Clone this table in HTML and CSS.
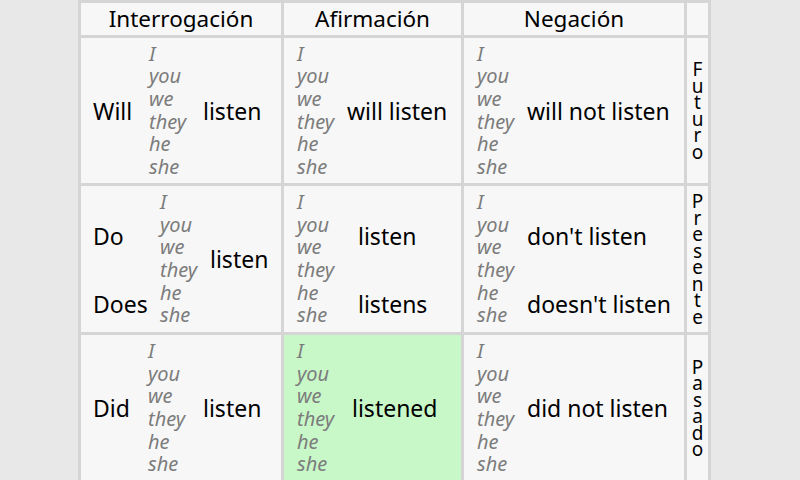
FILE: index.html
```html
<!DOCTYPE html>
<html lang="es">
<head>
<meta charset="utf-8">
<title>listen</title>
<link rel="stylesheet" href="styles.css">
</head>
<body>
<div class="table">
  <div class="cell head">Interrogación</div>
  <div class="cell head">Afirmación</div>
  <div class="cell head">Negación</div>
  <div class="cell head"></div>

  <div class="cell c1">
    <div class="lbl lbl-will">Will</div>
    <div class="pr">I<br>you<br>we<br>they<br>he<br>she</div>
    <div class="verb m14">listen</div>
  </div>
  <div class="cell c2">
    <div class="pr">I<br>you<br>we<br>they<br>he<br>she</div>
    <div class="verb m10">will listen</div>
  </div>
  <div class="cell c3">
    <div class="pr">I<br>you<br>we<br>they<br>he<br>she</div>
    <div class="verb m10">will not listen</div>
  </div>
  <div class="cell side"><div class="word">Futuro</div></div>

  <div class="cell c1">
    <div class="lbl lbl-do">
      <div class="b4">Do</div>
      <div class="b2">Does</div>
    </div>
    <div class="pr">I<br>you<br>we<br>they<br>he<br>she</div>
    <div class="verb m10">listen</div>
  </div>
  <div class="cell c2">
    <div class="pr">I<br>you<br>we<br>they<br>he<br>she</div>
    <div class="verbs m21">
      <div class="b4">listen</div>
      <div class="b2">listens</div>
    </div>
  </div>
  <div class="cell c3">
    <div class="pr">I<br>you<br>we<br>they<br>he<br>she</div>
    <div class="verbs m10">
      <div class="b4">don't listen</div>
      <div class="b2">doesn't listen</div>
    </div>
  </div>
  <div class="cell side"><div class="word">Presente</div></div>

  <div class="cell c1">
    <div class="lbl lbl-did">Did</div>
    <div class="pr">I<br>you<br>we<br>they<br>he<br>she</div>
    <div class="verb m15">listen</div>
  </div>
  <div class="cell c2 green">
    <div class="pr">I<br>you<br>we<br>they<br>he<br>she</div>
    <div class="verb m15">listened</div>
  </div>
  <div class="cell c3">
    <div class="pr">I<br>you<br>we<br>they<br>he<br>she</div>
    <div class="verb m10">did not listen</div>
  </div>
  <div class="cell side"><div class="word">Pasado</div></div>
</div>
</body>
</html>
```

FILE: styles.css
```css
html, body {
  margin: 0;
  padding: 0;
  background: #e8e8e8;
  overflow: hidden;
  width: 800px;
  height: 480px;
}

body {
  font-family: "Noto Sans", "Open Sans", "DejaVu Sans", sans-serif;
  color: #000;
}

.table {
  display: grid;
  grid-template-columns: 200px 177px 220px 21px;
  grid-template-rows: 32px 145px 146px 146px;
  gap: 3px;
  padding: 3px;
  background: #d5d5d5;
  width: max-content;
  margin-left: 78px;
}

.cell {
  background: #f7f7f7;
  display: flex;
  align-items: center;
  overflow: hidden;
}

.green {
  background: #c8f7c8;
}

.head {
  justify-content: center;
  font-size: 22.5px;
  line-height: 32px;
  padding-bottom: 1px;
}

.c1 {
  padding-left: 12px;
}

.c2, .c3 {
  padding-left: 13px;
}

.lbl {
  font-size: 23px;
  flex: none;
}

.lbl-will { width: 56px; }
.lbl-do { width: 67px; }
.lbl-did { width: 55px; }

.pr {
  flex: none;
  width: 40px;
  font-style: italic;
  color: #7c7c7c;
  font-size: 20px;
  line-height: 22.6px;
  white-space: nowrap;
}

.verb, .verbs {
  font-size: 23px;
  white-space: nowrap;
  flex: none;
}

.b4 {
  height: 90.4px;
  display: flex;
  align-items: center;
}

.b2 {
  height: 45.2px;
  display: flex;
  align-items: center;
}

.m10 { margin-left: 10px; }
.m12 { margin-left: 12px; }
.m14 { margin-left: 14px; }
.m15 { margin-left: 15px; }
.m21 { margin-left: 21px; }

.side {
  justify-content: center;
}

.word {
  width: 12px;
  word-break: break-all;
  text-align: center;
  font-size: 19px;
  line-height: 16.5px;
}
```
